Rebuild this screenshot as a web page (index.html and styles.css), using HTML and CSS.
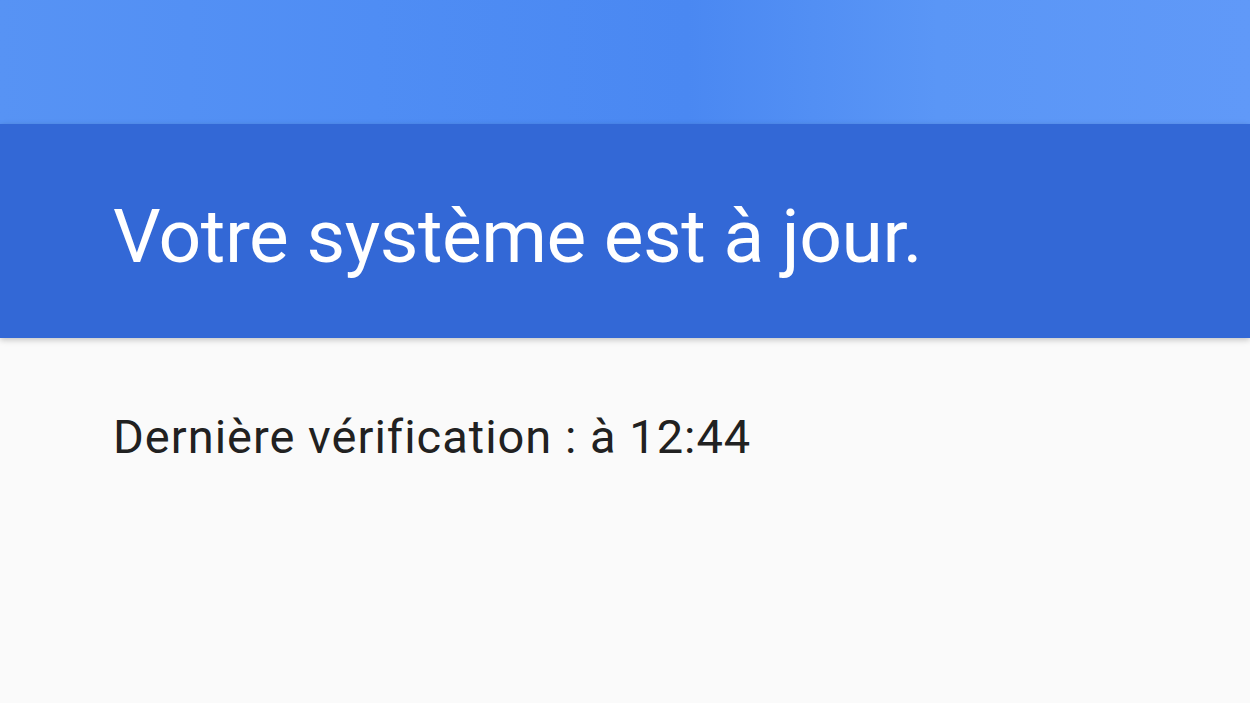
FILE: index.html
```html
<!DOCTYPE html>
<html lang="fr">
<head>
  <meta charset="UTF-8">
  <title>Mises à jour du système</title>
  <link rel="stylesheet" href="styles.css">
</head>
<body>
  <div class="toolbar"></div>
  <div class="status-header">
    <h1 class="status-title">Votre système est à jour.</h1>
  </div>
  <div class="content">
    <p class="last-check">Dernière vérification : à 12:44</p>
  </div>
</body>
</html>
```

FILE: styles.css
```css
html, body {
  height: 100%;
}
body {
  margin: 0;
  font-family: Roboto, "Noto Sans", sans-serif;
  background-color: #fafafa;
  display: flex;
  flex-direction: column;
  overflow: hidden;
}
.toolbar {
  height: 124px;
  flex-shrink: 0;
  background: linear-gradient(90deg, #5793f4 0%, #4f8df4 30%, #4a88f2 55%, #5a96f6 75%, #6099f8 100%);
}
.status-header {
  height: 214px;
  flex-shrink: 0;
  background-color: #3368d6;
  box-shadow: 0 2px 6px rgba(0, 0, 0, 0.22);
  padding: 75px 0 0 113px;
  box-sizing: border-box;
  position: relative;
  z-index: 1;
}
.status-title {
  margin: 0;
  color: #ffffff;
  font-size: 75px;
  font-weight: 400;
  line-height: 1;
  letter-spacing: -0.5px;
}
.content {
  flex: 1;
  padding: 75px 0 0 113px;
}
.last-check {
  margin: 0;
  color: #212121;
  font-size: 47px;
  line-height: 1;
  letter-spacing: 1px;
}
```
